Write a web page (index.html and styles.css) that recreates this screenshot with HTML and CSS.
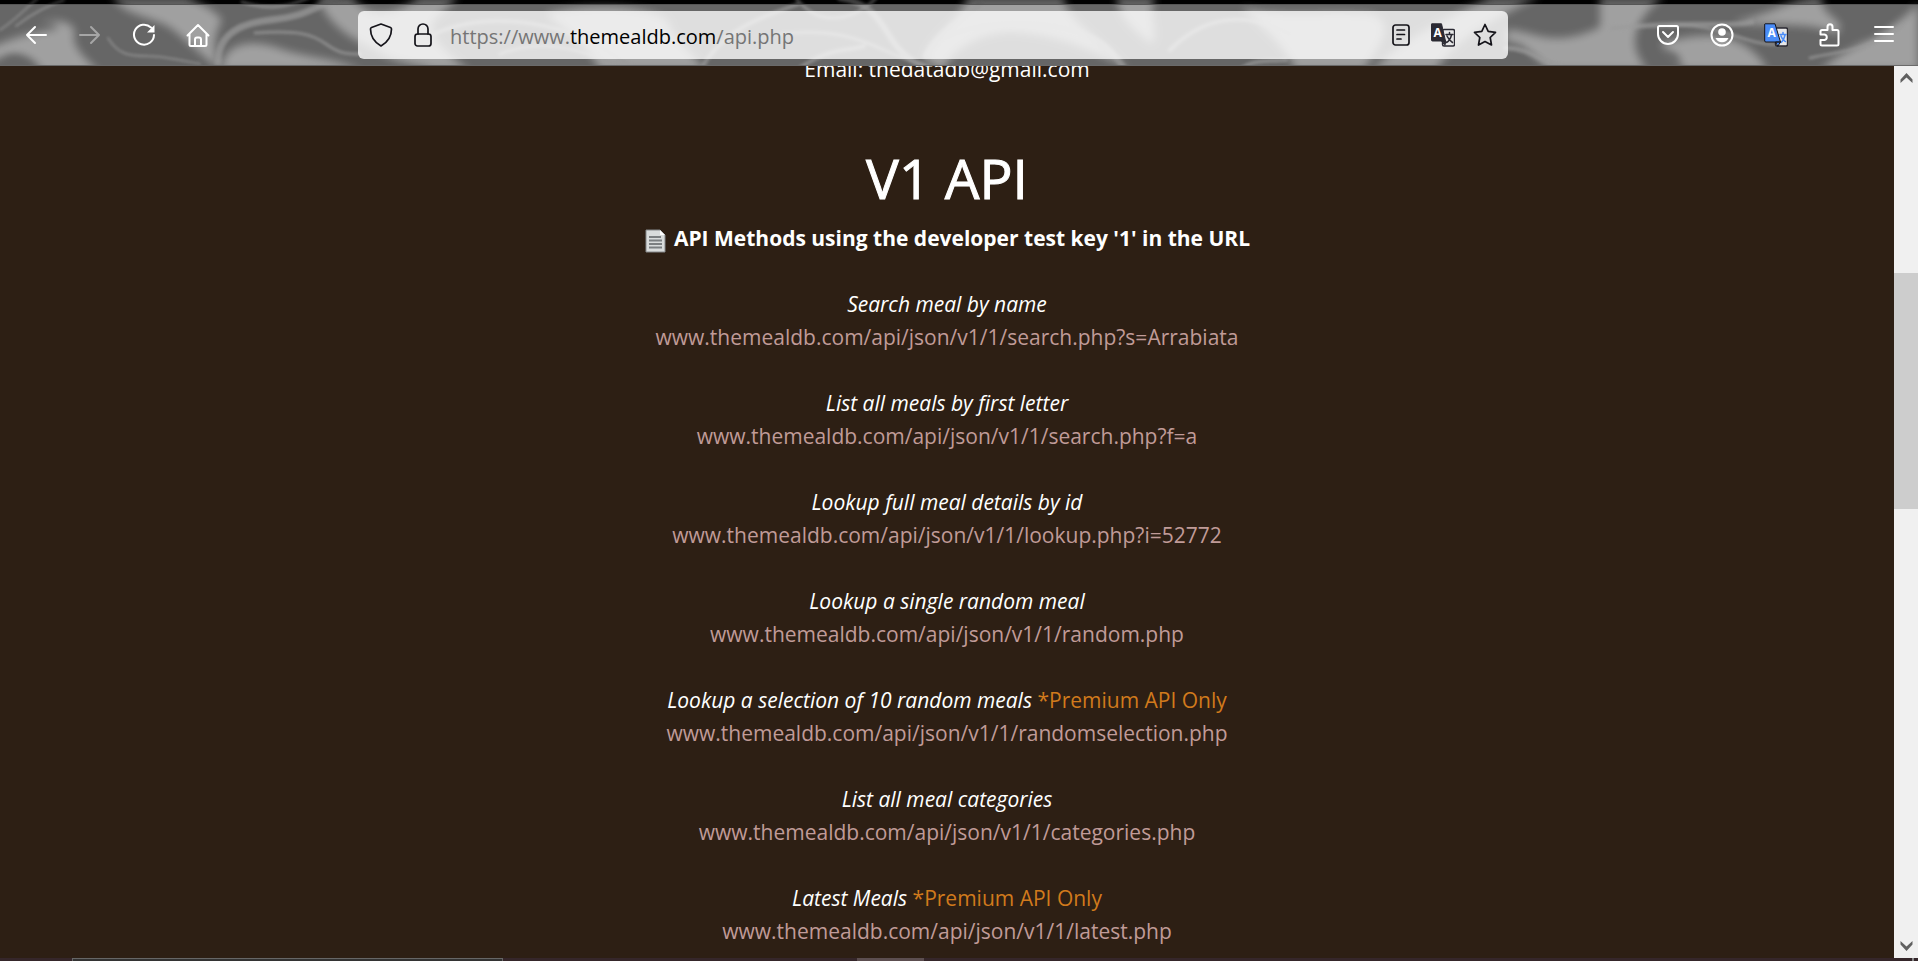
FILE: index.html
```html
<!DOCTYPE html>
<html lang="en">
<head>
<meta charset="utf-8">
<title>TheMealDB API</title>
<link rel="stylesheet" href="styles.css">
</head>
<body>
<header class="toolbar">
  <svg class="marble" viewBox="0 0 1918 66" preserveAspectRatio="none" aria-hidden="true">
    <defs>
      <filter id="soft" x="-5%" y="-30%" width="110%" height="160%"><feGaussianBlur stdDeviation="4"/></filter>
      <filter id="fine" x="-5%" y="-30%" width="110%" height="160%"><feGaussianBlur stdDeviation="1.600"/></filter>
    </defs>
    <rect width="1918" height="66" fill="#000"/>
    <g fill="#626262" filter="url(#soft)">
      <path d="M-9 48C15 36 38 32 50 30C64 28 58 22 40 23C58 18 74 22 75 33C70 44 84 58 100 72H42C34 54 14 50-9 62Z"/>
      <path d="M112-4C124 18 158 16 176 32C192 46 206 58 220 70C212 48 214 34 222 20C212 8 200 4 186-4Z"/>
      <path d="M222 70C222 42 254 38 284 50C310 58 334 58 362 70Z"/>
      <path d="M318-4C322 14 340 32 360 42L376 50C398 66 424 64 432 70H470C450 56 430 40 432 24C440 12 452 6 458-4H420C392 18 368 20 352-4Z"/>
      <path d="M545 14C580 4 640 2 668 20C670 36 690 50 706 70H600C590 48 566 30 545 14Z"/>
      <path d="M924 60C930 34 958 26 968-4H1064C1062 16 1094 34 1130 70C1094 50 1056 34 1010 32C976 34 950 52 944 70Z"/>
      <path d="M1116-4C1118 18 1138 34 1152 44C1160 30 1146 14 1156-4Z"/>
      <path d="M1242 8C1292 18 1322 10 1372 14C1396 24 1382 42 1364 70H1296C1282 42 1262 28 1242 8Z"/>
      <path d="M1372 70C1404 38 1440 22 1492-4H1540C1482 24 1452 44 1436 70Z"/>
      <path d="M1506 30C1532 28 1552 54 1610 22V70H1550C1536 60 1524 40 1506 42Z"/>
      <path d="M1600-4H1664C1636 18 1624 44 1648 70H1600Z"/>
      <path d="M1660 44C1700 32 1742 28 1768 70H1686C1676 60 1668 52 1660 44Z"/>
      <path d="M1732 22C1782 12 1792-4 1822-4C1818 18 1852 20 1836 34C1808 20 1778 28 1732 22Z"/>
      <path d="M1820 70C1850 44 1888 36 1918 4V70Z"/>
    </g>
    <g fill="none" stroke="#585858" stroke-opacity=".7" stroke-linecap="round" filter="url(#fine)">
      <path stroke-width="7" d="M218 62C218 38 234 24 270 20S308 10 338-2"/>
      <path stroke-width="3" d="M242 2C266 10 286 8 308-2M255 33C298 30 312 34 326 44S346 54 360 54"/>
      <path stroke-width="2" d="M108 38C118 54 128 56 146 56S180 60 200 64M0 30C18 18 28 6 38-2M16 26C34 12 48 6 64 0"/>
      <path stroke-width="4" d="M430 36C470 16 520 18 560 30S620 60 636 70M700 70C724 30 754 20 798 4"/>
      <path stroke-width="3" d="M500 54C550 34 590 56 624 66M780 34C830 28 858 38 884 50S918 62 930 70M796-2C822 32 860 16 876-2"/>
      <path stroke-width="6" d="M840-2C880 4 884 34 900 50S920 62 932 70M926 56C940 28 968 18 980 4M948 36C990 18 1048 22 1078 32S1112 54 1126 70"/>
      <path stroke-width="4" d="M1170 50C1200 20 1240 8 1290 34M800 68C828 48 844 52 864 46M1240 70C1254 58 1270 62 1286 60"/>
      <path stroke-width="5" d="M1506 48C1530 48 1540 62 1560 66M1612 28C1700 20 1728 28 1752 22"/>
      <path stroke-width="3" d="M1670 26C1720 22 1748 48 1782 44M1810 58C1842 50 1862 54 1902 26"/>
    </g>
    <g fill="#000" filter="url(#soft)">
      <path d="M6 58Q20 50 34 70H0ZM1662 52Q1688 54 1676 64Q1662 62 1662 52ZM1868 36Q1896 20 1904-4H1866Q1880 18 1852 32Z"/>
    </g>
  </svg>
  <div class="shade"></div>
  <nav class="bar" aria-label="Browser">
    <div class="tools">
      <button class="tool" aria-label="Back"><svg viewBox="0 0 24 24"><path d="M22 12H3M11 4L3 12l8 8"/></svg></button>
      <button class="tool dim" aria-label="Forward"><svg viewBox="0 0 24 24"><path d="M2 12h19M13 4l8 8-8 8"/></svg></button>
      <button class="tool" aria-label="Reload"><svg viewBox="0 0 24 24"><path d="M19 4.500A10 10 0 1 0 22 12"/><path class="solid" d="M22.500 2v7.500h-7.500z"/></svg></button>
      <button class="tool" aria-label="Home"><svg viewBox="0 0 24 24"><path d="M1.500 12.500L12 2l10.500 10.500M3.500 11v10.500q0 1.500 1.500 1.500h14q1.500 0 1.500-1.500V11M9 23v-6.500a2 2 0 0 1 2-2h2a2 2 0 0 1 2 2V23"/></svg></button>
    </div>
    <div class="url-bar">
      <button class="inner" aria-label="Tracking protection"><svg viewBox="0 0 24 24"><path d="M12 1L21.500 4.500q1 .4 1 1.500c0 8-3.500 13-10.500 17C5 19 1.500 14 1.500 6q0-1.100 1-1.500z"/></svg></button>
      <button class="inner" aria-label="Site security"><svg viewBox="0 0 24 24"><rect x="4" y="11" width="16" height="12" rx="2.500"/><path d="M7 11V6a5 5 0 0 1 10 0v5"/></svg></button>
      <div class="address" role="textbox" contenteditable="true" aria-label="Address" spellcheck="false">https://www.<span class="domain">themealdb.com</span>/api.php</div>
      <button class="inner" aria-label="Reader view"><svg viewBox="0 0 24 24"><rect x="4" y="2" width="16" height="20" rx="2.500"/><path d="M8 7h7.500M8 11.500h7.500M8 16h4"/></svg></button>
      <button class="inner" aria-label="Translate page"><svg class="translate" viewBox="0 0 24 24"><rect class="sheet" x="11.500" y="6.500" width="12" height="16.500" rx="1.500"/><path class="mark" d="M15 11.500h7M18.500 9.500v2M20.500 12c-1 4-2 6-5 7.500M16 13c1.500 3.500 3 5 5.500 6.500"/><path class="panel" d="M1 .8h9.500L14.500 18H1.500Q.5 18 .5 17V1.500zM11 18h4l-1 4z"/><text x="2.500" y="14">A</text></svg></button>
      <button class="inner" aria-label="Bookmark"><svg viewBox="0 0 24 24"><path d="M12 1.500l3.200 6.800 7.300 1-5.300 5.200 1.300 7.500L12 18.500 5.500 22l1.300-7.500L1.500 9.300l7.300-1z"/></svg></button>
    </div>
    <div class="tools">
      <button class="tool" aria-label="Pocket"><svg viewBox="0 0 24 24"><path d="M3.500 3h17q1.500 0 1.500 1.500V11a10 10 0 0 1-20 0V4.500Q2 3 3.500 3zM7 9l5 5 5-5"/></svg></button>
      <button class="tool" aria-label="Account"><svg viewBox="0 0 24 24"><circle cx="12" cy="12" r="10.500"/><circle class="solid" cx="12" cy="9" r="3.800"/><path class="solid" d="M5.500 15h13c-1.500 3-3.500 4.300-6.500 4.300S7 18 5.500 15z"/></svg></button>
      <button class="tool" aria-label="Translate"><svg class="translate blue" viewBox="0 0 24 24"><rect class="sheet" x="11.500" y="5" width="12" height="18" rx="1.500"/><path class="mark" d="M16 11.500h6M19 9.500v2M21 12c-1 4-2 6-4 7.500M17 13c1 3.500 2.500 4 4.500 5.500"/><path class="panel" d="M1.500.8H11L16.500 19H2Q.7 19 .7 18V1.500zM12 19h4.500L14 23z"/><text x="3.500" y="14">A</text></svg></button>
      <button class="tool" aria-label="Extensions"><svg viewBox="0 0 24 24"><path d="M4 22.500q-1.500 0-1.500-1.500v-4h4a2.800 2.800 0 0 0 0-5.500h-4V8.500Q2.500 7 4 7h5.500V3.800a2.500 2.500 0 0 1 5 0V7h4.500q1.500 0 1.500 1.500V21q0 1.500-1.500 1.500z"/></svg></button>
      <button class="tool" aria-label="Menu"><svg viewBox="0 0 24 24"><path d="M3 4h18M3 11h18M3 18h18"/></svg></button>
    </div>
  </nav>
</header>
<div class="viewport">
  <main class="page">
    <p class="contact">Email: thedatadb@gmail.com</p>
    <h1>V1 API</h1>
    <p class="lead"><svg class="doc" viewBox="0 0 22 24" aria-hidden="true"><path d="M2 1h14l5 5v17H2z" fill="#d9dcdc" stroke="#85888a" stroke-width="1"/><path d="M16 1v5h5z" fill="#fff"/><path d="M5 8h12M5 11.500h13M5 15h13M5 18.500h13" stroke="#7b7f81" stroke-width="2"/></svg><b>API Methods using the developer test key '1' in the URL</b></p>
    <section class="method"><i>Search meal by name</i><br><a href="#search">www.themealdb.com/api/json/v1/1/search.php?s=Arrabiata</a></section>
    <section class="method"><i>List all meals by first letter</i><br><a href="#letter">www.themealdb.com/api/json/v1/1/search.php?f=a</a></section>
    <section class="method"><i>Lookup full meal details by id</i><br><a href="#lookup">www.themealdb.com/api/json/v1/1/lookup.php?i=52772</a></section>
    <section class="method"><i>Lookup a single random meal</i><br><a href="#random">www.themealdb.com/api/json/v1/1/random.php</a></section>
    <section class="method"><i>Lookup a selection of 10 random meals</i> <span class="premium">*Premium API Only</span><br><a href="#selection">www.themealdb.com/api/json/v1/1/randomselection.php</a></section>
    <section class="method"><i>List all meal categories</i><br><a href="#categories">www.themealdb.com/api/json/v1/1/categories.php</a></section>
    <section class="method"><i>Latest Meals</i> <span class="premium">*Premium API Only</span><br><a href="#latest">www.themealdb.com/api/json/v1/1/latest.php</a></section>
  </main>
  <div class="scrollbar" aria-hidden="true">
    <svg class="arrow" viewBox="0 0 12 10"><path d="M0 6.500L6 0l6 6.500V10L6 4.500 0 10z"/></svg>
    <div class="track"><div class="thumb"></div></div>
    <svg class="arrow" viewBox="0 0 12 10"><path d="M0 3.500L6 10l6-6.500V0L6 5.500 0 0z"/></svg>
  </div>
</div>
<footer class="taskbar"><div class="search"></div><div class="active"></div><div class="edge"></div></footer>
</body>
</html>
```
FILE: styles.css
```css
* { box-sizing: border-box; }
body {
  margin: 0;
  height: 100vh;
  display: flex;
  flex-direction: column;
  overflow: hidden;
  background: #2d1f14;
  color: #fff;
  font: 21px/33px "Open Sans", "Noto Sans", sans-serif;
}
p, h1 { margin: 0; }
button { border: 0; padding: 0; background: none; color: inherit; }

/* Browser toolbar */
.toolbar { position: relative; flex: none; padding-top: 4px; }
.marble { position: absolute; inset: 0; width: 100%; height: 100%; }
.shade {
  position: absolute;
  inset: 4px 0 0;
  background: rgba(255, 255, 255, .4);
  border-top: 1px solid #555;
  border-bottom: 1px solid #6a6a6a;
}
.bar { position: relative; display: flex; align-items: center; height: 62px; padding: 0 10px 0 12px; }
.tools { display: flex; gap: 6px; }
.tool, .inner { display: flex; align-items: center; justify-content: center; height: 48px; }
.tool { width: 48px; }
.inner { width: 42px; color: #15141a; }
.tool svg, .inner svg {
  width: 24px;
  height: 24px;
  fill: none;
  stroke: currentColor;
  stroke-width: 2;
  stroke-linecap: round;
  stroke-linejoin: round;
}
.inner svg { stroke-width: 1.7; }
.tool .solid { fill: currentColor; stroke: none; }
.dim { color: #a6a6a6; }
.url-bar {
  flex: 1;
  display: flex;
  align-items: center;
  height: 48px;
  margin: 0 136px;
  padding: 0 2px;
  border-radius: 6px;
  background: rgba(255, 255, 255, .79);
}
.address { flex: 1; padding: 2px 0 0 6px; color: #757575; font-size: 20px; white-space: nowrap; outline: 0; }
.domain { color: #000; }
.translate .sheet { fill: #e8e8e8; stroke: #2b2a33; stroke-width: 1.4; }
.translate .mark { stroke: #2b2a33; stroke-width: 1.5; }
.translate .panel { fill: #2b2a33; stroke: #2b2a33; stroke-width: 1; }
.translate text { fill: #fff; stroke: none; font: 700 12px "Open Sans", sans-serif; }
.translate.blue .panel { fill: #4a8cf7; stroke: #15141a; }
.translate.blue .mark { stroke: #4a8cf7; }

/* Page */
.viewport { flex: 1; display: flex; min-height: 0; }
.page { flex: 1; overflow: hidden; text-align: center; }
.contact { margin-top: -13px; }
h1 {
  margin: 62px 0 14px;
  font-size: 55px;
  line-height: 60px;
  font-weight: 500;
  -webkit-text-stroke: 1px #fff;
}
.lead { display: flex; align-items: center; justify-content: center; gap: 8px; }
.doc { width: 22px; height: 24px; margin-top: 4px; }
.method { margin-top: 33px; }
.page a { color: #c09b98; text-decoration: none; }
.premium { color: #d17a1c; }

/* Scrollbar */
.scrollbar {
  display: flex;
  flex-direction: column;
  align-items: center;
  width: 24px;
  padding: 7px 0;
  background: #f0f0f0;
}
.arrow { width: 13px; height: 10px; fill: #606060; }
.track { flex: 1; align-self: stretch; }
.thumb { height: 27.500%; margin-top: 190px; background: #cdcdcd; }

/* Taskbar edge */
.taskbar { display: flex; height: 3px; background: #35262a; }
.search { width: 431px; margin-left: 72px; background: #333; border: 1px solid #666; border-bottom: 0; }
.active { width: 67px; margin-left: 354px; background: #5c4e50; }
.edge { width: 2px; margin: 0 4px 0 auto; background: #888; }
```
